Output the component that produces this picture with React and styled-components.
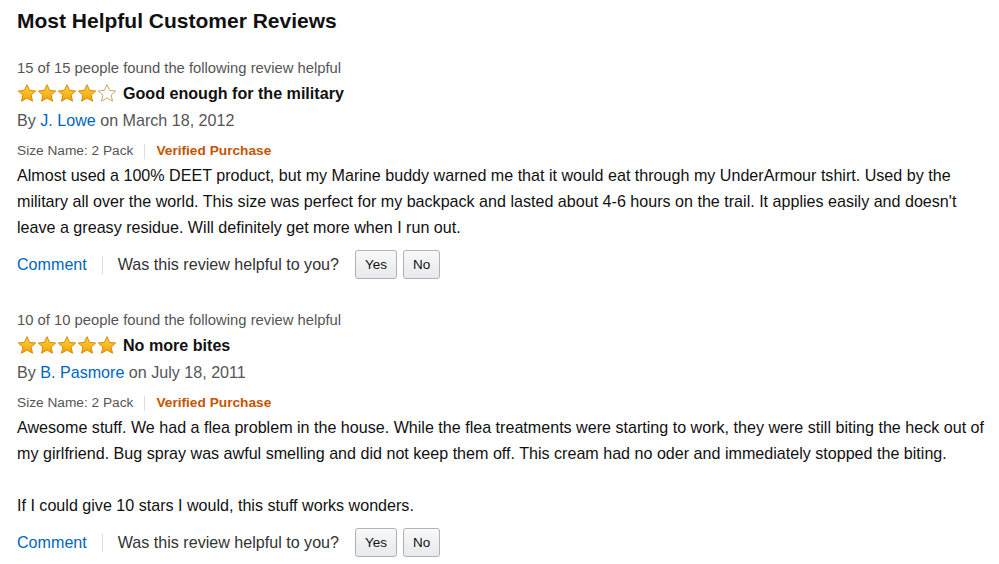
import React from "react";
import styled, { createGlobalStyle } from "styled-components";

const Global = createGlobalStyle`
  html, body { margin: 0; padding: 0; background: #fff; }
  body { font-family: "Liberation Sans", Arial, sans-serif; color: #111; }
`;

const Page = styled.div`
  padding: 8px 0 0 17px;
  width: 978px;
`;

const Title = styled.h2`
  margin: 0 0 23px 0;
  font-size: 21px;
  font-weight: bold;
  line-height: 26px;
  color: #111;
`;

const Review = styled.div`
  margin-bottom: 30px;
  &:last-child { margin-bottom: 0; }
`;

const Helpful = styled.div`
  font-size: 14.8px;
  line-height: 22px;
  color: #555;
`;

const TitleRow = styled.div`
  display: flex;
  align-items: center;
  gap: 6px;
  height: 28px;
`;

const Stars = styled.div`
  display: flex;
  gap: 0px;
`;

const ReviewTitle = styled.span`
  font-size: 16.1px;
  font-weight: bold;
  color: #111;
`;

const Byline = styled.div`
  font-size: 16.1px;
  line-height: 26px;
  color: #555;
`;

const Link = styled.a`
  color: #0066c0;
  text-decoration: none;
`;

const Meta = styled.div`
  display: flex;
  align-items: center;
  font-size: 13.7px;
  line-height: 18px;
  color: #555;
  margin-top: 9px;
`;

const Sep = styled.span`
  display: inline-block;
  width: 1px;
  height: ${(p) => p.$h || 15}px;
  background: #ddd;
  margin: 0 ${(p) => p.$gap || 11}px;
`;

const Verified = styled.span`
  color: #c45500;
  font-weight: bold;
`;

const Body = styled.div`
  font-size: 16.1px;
  line-height: 26px;
  color: #111;
  margin-top: 2px;
`;

const Para = styled.p`
  margin: 0 0 26px 0;
  &:last-child { margin-bottom: 0; }
`;

const Actions = styled.div`
  display: flex;
  align-items: center;
  margin-top: 10px;
  font-size: 16.1px;
  color: #333;
`;

const Btn = styled.button`
  font-family: "Liberation Sans", Arial, sans-serif;
  font-size: 13.5px;
  color: #111;
  height: 29px;
  padding: 0 ${(p) => p.$pad}px;
  margin-left: ${(p) => p.$ml}px;
  border: 1px solid #adb1b8;
  border-radius: 3px;
  background: linear-gradient(#f7f8fa, #e7e9ec);
  box-shadow: 0 1px 0 rgba(255,255,255,.6) inset;
`;

const Star = ({ filled }) => (
  <svg width="20" height="20" viewBox="0 0 20 19">
    <defs>
      <linearGradient id="sg" x1="0" y1="0" x2="0" y2="1">
        <stop offset="0" stopColor="#ffd24a" />
        <stop offset="1" stopColor="#f3a200" />
      </linearGradient>
    </defs>
    <path
      d="M10 1.2 L12.6 6.9 L18.7 7.5 L14.1 11.6 L15.5 17.7 L10 14.5 L4.5 17.7 L5.9 11.6 L1.3 7.5 L7.4 6.9 Z"
      fill={filled ? "url(#sg)" : "#fff"}
      stroke={filled ? "#d88a00" : "#c9a66a"}
      strokeWidth="1"
      strokeLinejoin="round"
    />
  </svg>
);

const reviews = [
  {
    helpful: "15 of 15 people found the following review helpful",
    stars: 4,
    title: "Good enough for the military",
    author: "J. Lowe",
    date: "March 18, 2012",
    paras: [
      "Almost used a 100% DEET product, but my Marine buddy warned me that it would eat through my UnderArmour tshirt. Used by the military all over the world. This size was perfect for my backpack and lasted about 4-6 hours on the trail. It applies easily and doesn't leave a greasy residue. Will definitely get more when I run out.",
    ],
  },
  {
    helpful: "10 of 10 people found the following review helpful",
    stars: 5,
    title: "No more bites",
    author: "B. Pasmore",
    date: "July 18, 2011",
    paras: [
      "Awesome stuff. We had a flea problem in the house. While the flea treatments were starting to work, they were still biting the heck out of my girlfriend. Bug spray was awful smelling and did not keep them off. This cream had no oder and immediately stopped the biting.",
      "If I could give 10 stars I would, this stuff works wonders.",
    ],
  },
];

export default function App() {
  return (
    <>
      <Global />
      <Page>
        <Title>Most Helpful Customer Reviews</Title>
        {reviews.map((r) => (
          <Review key={r.author}>
            <Helpful>{r.helpful}</Helpful>
            <TitleRow>
              <Stars>
                {[0, 1, 2, 3, 4].map((i) => (
                  <Star key={i} filled={i < r.stars} />
                ))}
              </Stars>
              <ReviewTitle>{r.title}</ReviewTitle>
            </TitleRow>
            <Byline>
              By <Link href="#">{r.author}</Link> on {r.date}
            </Byline>
            <Meta>
              Size Name: 2 Pack
              <Sep />
              <Verified>Verified Purchase</Verified>
            </Meta>
            <Body>
              {r.paras.map((p, i) => (
                <Para key={i}>{p}</Para>
              ))}
            </Body>
            <Actions>
              <Link href="#">Comment</Link>
              <Sep $gap={15} $h={18} />
              Was this review helpful to you?
              <Btn $pad={9} $ml={16}>Yes</Btn>
              <Btn $pad={9} $ml={6}>No</Btn>
            </Actions>
          </Review>
        ))}
      </Page>
    </>
  );
}
